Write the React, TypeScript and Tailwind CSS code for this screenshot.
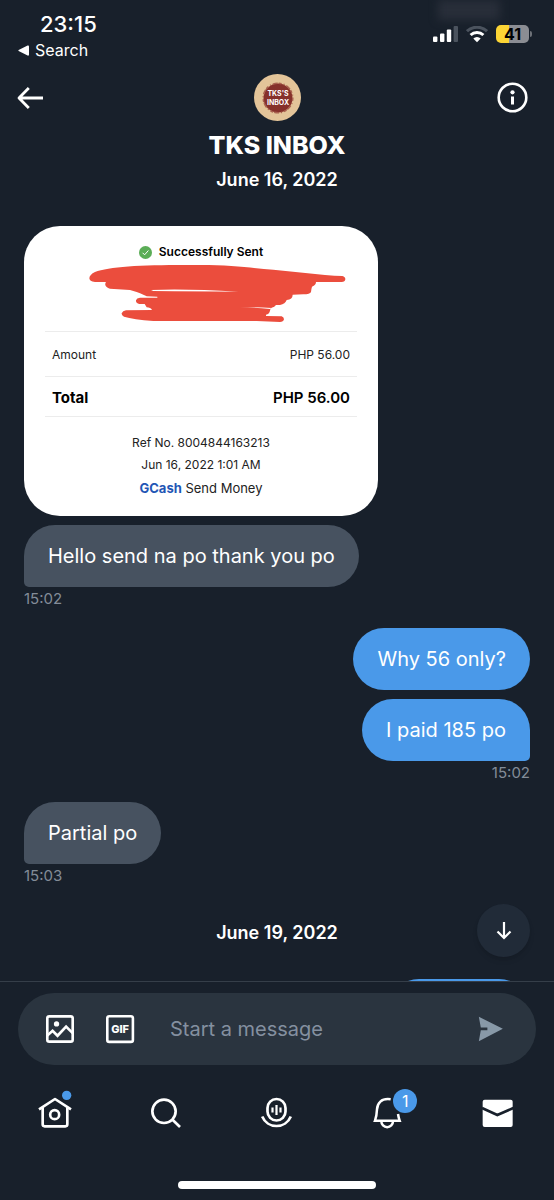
import type { ReactNode } from "react";
import clsx from "clsx";

interface Message {
	text: string;
	mine?: boolean;
	time?: string;
}

function StatusIcons() {
	return (
		<div className="flex h-11 items-center gap-2 pr-[22px]">
			<svg viewBox="0 0 25 17" className="h-[17px] w-[25px]" fill="white">
				<rect x="0" y="10.5" width="4.4" height="5.5" rx="1" />
				<rect x="7" y="7.5" width="4.4" height="8.5" rx="1" />
				<rect x="13.8" y="3.5" width="4.4" height="12.5" rx="1" />
				<rect x="20.6" y="0" width="4.4" height="16" rx="1" fill="#4b535e" />
			</svg>
			<svg viewBox="0 0 22 17" className="h-[17px] w-[22px]" fill="none">
				<path d="M1 5.2a14.5 14.5 0 0 1 20 0" stroke="#4b535e" strokeWidth="3" />
				<path d="M4.6 9a9.3 9.3 0 0 1 12.8 0" stroke="white" strokeWidth="3" />
				<path d="M11 16.2 7.3 12.5a5.3 5.3 0 0 1 7.4 0z" fill="white" />
			</svg>
			<div className="flex items-center gap-px">
				<div className="flex h-[18px] w-[33px] items-center justify-center rounded-[5px] bg-linear-to-r from-[#fcd535] from-40% to-[#8b8d93] to-40% text-base font-bold text-black">
					41
				</div>
				<div className="h-1.5 w-0.5 rounded-r bg-[#6d7178]" />
			</div>
		</div>
	);
}

function Header() {
	return (
		<header className="relative">
			<div className="absolute top-0 right-[54px] h-5 w-[62px] bg-[#282e39] blur-xs" />
			<div className="relative flex justify-between pt-3">
				<div className="pl-[18px]">
					<div className="pl-[22px] text-[22px] leading-6 font-medium">23:15</div>
					<a href="#search" className="mt-1 flex items-center gap-1.5 text-base leading-5">
						<svg viewBox="0 0 11 11" className="size-[11px]" fill="white">
							<path d="M.6 5 9.6.5Q11 0 11 1.500V9.500Q11 11 9.600 10.500L.6 6Q0 5.500.6 5z" />
						</svg>
						Search
					</a>
				</div>
				<StatusIcons />
			</div>
			<div className="mt-3.5 grid grid-cols-3 items-center px-4">
				<button type="button" aria-label="Back" className="justify-self-start">
					<svg viewBox="0 0 28 24" className="h-6 w-7" fill="none" stroke="white" strokeWidth="2.8" strokeLinejoin="round">
						<path d="M12.800 2 3 12l9.800 10M3 12h24" />
					</svg>
				</button>
				<svg viewBox="0 0 47 47" className="size-[47px] justify-self-center" role="img" aria-label="TKS's Inbox">
					<circle cx="23.500" cy="23.500" r="23.500" fill="#e3c499" />
					<circle cx="24" cy="24" r="14.500" fill="#86302b" />
					<circle cx="24" cy="24" r="14.800" fill="none" stroke="#a8604f" strokeWidth="1.500" strokeDasharray="3 2 1 2 5 1" />
					<g fill="white" textAnchor="middle" fontWeight="700" fontFamily="Inter, sans-serif">
						<text x="24" y="22" fontSize="7">
							TKS'S
						</text>
						<text x="24" y="31" fontSize="7">
							INBOX
						</text>
					</g>
				</svg>
				<button type="button" aria-label="Conversation info" className="mr-[10px] justify-self-end">
					<svg viewBox="0 0 31 31" className="size-[31px]" fill="none" stroke="white">
						<circle cx="15.500" cy="15.500" r="13.800" strokeWidth="2.600" />
						<circle cx="15.500" cy="10.300" r="2.100" fill="white" stroke="none" />
						<path d="M15.500 14.500v8" strokeWidth="3" />
					</svg>
				</button>
			</div>
			<h1 className="mt-2 text-center text-[25px] leading-8 font-extrabold">TKS INBOX</h1>
		</header>
	);
}

function DateLabel({ children }: { children: ReactNode }) {
	return <div className="text-center text-lg leading-6 font-semibold">{children}</div>;
}

function Receipt() {
	return (
		<div className="w-[354px] max-w-full rounded-[36px] bg-white px-[21px] py-4 text-xs text-[#222]">
			<div className="flex items-center justify-center gap-[7px] leading-5 font-semibold text-black">
				<svg viewBox="0 0 13 13" className="size-[13px]" fill="none">
					<circle cx="6.500" cy="6.500" r="6.500" fill="#5bad57" />
					<path d="m3.600 6.800 2 2 3.800-4.300" stroke="white" />
				</svg>
				Successfully Sent
			</div>
			<svg viewBox="75 126 936 207" className="h-[69px] w-full" fill="#eb4d3d">
				<path d="M225 186C200 184 205 165 225 156C270 138 380 134 540 135C640 135 700 145 760 149L915 165Q945 168 967 168Q976 170 976 178Q975 186 965 186H888Q888 196 876 200Q874 206 873 216Q870 223 850 223L818 224Q818 238 800 240Q796 252 780 255H768Q764 261 755 263Q750 266 750 272Q748 282 738 284V288L785 289Q792 292 792 298Q790 306 780 306L710 303H400Q340 298 312 290Q304 285 305 280Q308 272 318 271L396 270Q392 262 380 262L374 252H358Q347 250 348 241Q350 234 360 233H412V230L380 229Q372 224 350 216L330 210L270 206Q257 202 256 195Q255 190 258 186Z" />
				<path d="M393 210Q500 206 655 215Q520 214 400 213Z" fill="white" />
				<path d="M660 261Q700 261 756 264L750 267Q700 262 660 261Z" fill="white" />
			</svg>
			<table className="w-full border-b border-[#ececec]">
				<tbody>
					<tr className="h-[45px] border-t border-[#ececec]">
						<th scope="row" className="pt-0.5 pl-[7px] text-left font-normal">
							Amount
						</th>
						<td className="pt-0.5 pr-[7px] text-right">PHP 56.00</td>
					</tr>
					<tr className="h-10 border-t border-[#ececec] text-[15px] font-semibold text-black">
						<th scope="row" className="pt-0.5 pl-[7px] text-left">
							Total
						</th>
						<td className="pt-0.5 pr-[7px] text-right">PHP 56.00</td>
					</tr>
				</tbody>
			</table>
			<div className="pt-[15px] text-center leading-[22px]">
				<p>Ref No. 8004844163213</p>
				<p>Jun 16, 2022 1:01 AM</p>
				<p className="text-[13px] leading-6">
					<span className="font-bold text-[#1f56b5]">GCash</span> Send Money
				</p>
			</div>
		</div>
	);
}

function Bubble({ text, mine, time }: Message) {
	return (
		<div className={clsx("flex flex-col", mine ? "items-end" : "items-start")}>
			<div
				className={clsx(
					"rounded-[31px] px-6 py-[17px] text-xl leading-7",
					mine ? "bg-[#4a99e9]" : "bg-[#475260]",
					time && (mine ? "rounded-br-[5px]" : "rounded-bl-[5px]"),
				)}
			>
				{text}
			</div>
			{time && <time className="mt-0.5 text-[15px] leading-5 text-[#838c98]">{time}</time>}
		</div>
	);
}

function Composer() {
	return (
		<form className="mx-[18px] flex h-[72px] items-center rounded-full bg-[#2a343f] pr-8 pl-[27px]">
			<button type="button" aria-label="Add photo">
				<svg viewBox="134 102 91 91" className="size-[30px]" fill="none" stroke="white" strokeWidth="8">
					<rect x="141" y="109" width="77" height="77" rx="6" />
					<circle cx="169" cy="132" r="8" fill="white" stroke="none" />
					<path d="m141 167 16-14 15 15 26-28 20 20" />
				</svg>
			</button>
			<button type="button" aria-label="Add GIF" className="ml-[30px]">
				<svg viewBox="0 0 30 30" className="size-[30px]" fill="none">
					<rect x="2.300" y="2.300" width="25.600" height="25.600" rx="2" stroke="white" strokeWidth="2.600" />
					<text x="15.100" y="18.900" textAnchor="middle" fill="white" fontSize="11" fontWeight="800" fontFamily="Inter, sans-serif">
						GIF
					</text>
				</svg>
			</button>
			<input
				type="text"
				aria-label="Message"
				placeholder="Start a message"
				className="ml-[35px] min-w-0 flex-1 text-xl outline-none placeholder:text-[#8490a0]"
			/>
			<button type="submit" aria-label="Send">
				<svg viewBox="604 378 78 79" className="size-[26px]" fill="#8899a8">
					<path d="m606 380 73 37-73 38 6-34h20v-8h-20z" />
				</svg>
			</button>
		</form>
	);
}

function TabBar() {
	return (
		<nav className="grid h-24 grid-cols-5 items-center justify-items-center">
			<a href="#home" aria-label="Home">
				<svg viewBox="112 346 111 111" className="size-[37px] overflow-visible" fill="none" stroke="white" strokeWidth="8">
					<path d="m118 389 48-31 48 31" strokeLinejoin="round" />
					<path d="M129 383v51q0 6 6 6h62q6 0 6-6v-51" />
					<circle cx="165" cy="405" r="13.500" />
					<circle cx="201" cy="347" r="14" fill="#4a99e9" stroke="none" />
				</svg>
			</a>
			<a href="#explore" aria-label="Search">
				<svg viewBox="442 343 111 111" className="size-[37px]" fill="none" stroke="white" strokeWidth="8">
					<circle cx="490" cy="392" r="35" />
					<path d="m514 416 24 23" />
				</svg>
			</a>
			<a href="#spaces" aria-label="Spaces">
				<svg viewBox="0 0 37 37" className="size-[37px]" fill="none" stroke="white" strokeWidth="2.700">
					<rect x="9.500" y="4" width="18" height="21.500" rx="9" />
					<path d="M14.500 12.500v5M18.500 10v10M22.500 12.500v5" strokeWidth="2.200" />
					<path d="M4.200 21.500a15.500 15.500 0 0 0 28.600 0" />
				</svg>
			</a>
			<a href="#notifications" aria-label="Notifications" className="relative">
				<svg viewBox="276 105 111 111" className="size-[37px]" fill="none" stroke="white" strokeWidth="7.500">
					<path d="M341 118C312 114 301 130 300 148Q299 169 294 182H368Q365 174 363 162" />
					<path d="M313 184a17.500 17.500 0 0 0 35 0" />
				</svg>
				<span className="absolute -top-1.5 left-6 flex size-6 items-center justify-center rounded-full bg-[#4a99e9] text-base">
					1
				</span>
			</a>
			<a href="#messages" aria-label="Messages">
				<svg viewBox="610 104 111 111" className="size-[37px]">
					<rect x="618" y="118" width="90" height="82" rx="6" fill="white" />
					<path d="m616 143 46 21 48-21" fill="none" stroke="#18202b" strokeWidth="8" />
				</svg>
			</a>
		</nav>
	);
}

export default function App() {
	return (
		<div className="flex h-screen flex-col bg-[#18202b] font-[Inter,sans-serif] text-white">
			<Header />
			<div className="relative min-h-0 flex-1">
				<main className="h-full overflow-hidden px-6 pt-[7px]">
					<DateLabel>June 16, 2022</DateLabel>
					<div className="mt-[34px] flex flex-col gap-[19px]">
						<div className="flex flex-col gap-[9px]">
							<Receipt />
							<Bubble text="Hello send na po thank you po" time="15:02" />
						</div>
						<div className="flex flex-col gap-[9px]">
							<Bubble text="Why 56 only?" mine />
							<Bubble text="I paid 185 po" mine time="15:02" />
						</div>
						<Bubble text="Partial po" time="15:03" />
					</div>
					<div className="mt-[35px] mb-[34px]">
						<DateLabel>June 19, 2022</DateLabel>
					</div>
					<div className="ml-auto h-[62px] w-[142px] rounded-[31px] bg-[#4a99e9]" />
				</main>
				<button
					type="button"
					aria-label="Scroll to latest"
					className="absolute right-6 bottom-6 flex size-[53px] items-center justify-center rounded-full bg-[#212b38] shadow-md"
				>
					<svg viewBox="0 0 16 19" className="h-[19px] w-4" fill="none" stroke="white" strokeWidth="2.200">
						<path d="M8 1v16M1.500 10.500 8 17l6.500-6.500" />
					</svg>
				</button>
			</div>
			<footer className="border-t border-[#353e49] pt-[11px] pb-[11px]">
				<Composer />
				<TabBar />
				<div className="mx-auto mt-5 h-2 w-[198px] rounded-full bg-white" />
			</footer>
		</div>
	);
}
